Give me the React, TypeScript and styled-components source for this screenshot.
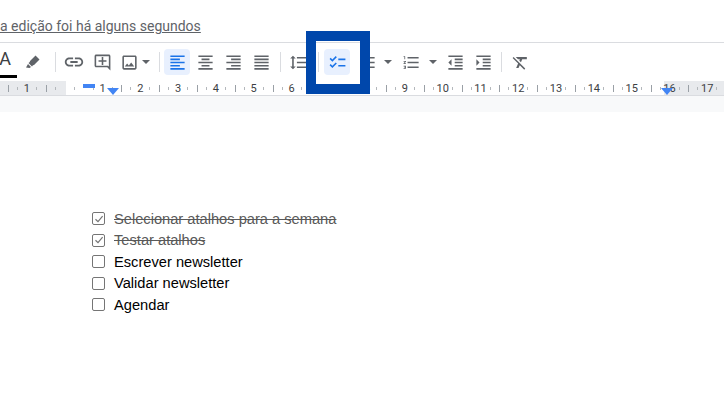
import styled, { createGlobalStyle } from "styled-components";
import { ReactNode } from "react";
import {
  MdChecklist,
  MdFormatAlignCenter,
  MdFormatAlignJustify,
  MdFormatAlignLeft,
  MdFormatAlignRight,
  MdFormatClear,
  MdFormatIndentDecrease,
  MdFormatIndentIncrease,
  MdFormatLineSpacing,
  MdFormatListBulleted,
  MdFormatListNumbered,
  MdLink,
  MdOutlineAddComment,
  MdOutlineImage,
} from "react-icons/md";

const CELL = 37.8;

const GlobalStyle = createGlobalStyle`
  html, body {
    margin: 0;
    background: #fff;
    overflow: hidden;
  }
`;

const Page = styled.div`
  position: relative;
  width: 724px;
  height: 408px;
  overflow: hidden;
  font-family: Roboto, "Liberation Sans", sans-serif;
`;

const StatusBar = styled.div`
  height: 42px;
  padding-top: 17px;
  box-sizing: border-box;
  font-size: 14px;
  line-height: 19px;
  color: #5f6368;
  text-decoration: underline;
  white-space: nowrap;
`;

const Toolbar = styled.div`
  display: flex;
  align-items: center;
  height: 39px;
  margin-left: -9px;
  border-top: 1px solid #dadce0;
  box-sizing: border-box;
  color: #5f6368;
`;

const ToolButton = styled.div<{ $w?: number; $ml?: number; $active?: boolean }>`
  display: flex;
  align-items: center;
  justify-content: center;
  flex: none;
  width: ${(p) => p.$w ?? 28}px;
  height: 26px;
  margin-left: ${(p) => p.$ml ?? 0}px;
  border-radius: 4px;
  background: ${(p) => (p.$active ? "#e8f0fe" : "transparent")};
  color: ${(p) => (p.$active ? "#1a73e8" : "#5f6368")};
`;

const Sep = styled.div<{ $l: number; $r: number }>`
  flex: none;
  width: 1px;
  height: 20px;
  margin: 0 ${(p) => p.$r}px 0 ${(p) => p.$l}px;
  background: #dadce0;
`;

const Caret = styled.div<{ $l?: number; $r?: number }>`
  flex: none;
  width: 0;
  height: 0;
  margin: 0 ${(p) => p.$r ?? 0}px 0 ${(p) => p.$l ?? 0}px;
  border-left: 4.5px solid transparent;
  border-right: 4.5px solid transparent;
  border-top: 4.5px solid #5f6368;
`;

const TextColorButton = styled.div`
  position: relative;
  flex: none;
  width: 28px;
  height: 32px;
  text-align: center;
  font-size: 18px;
  line-height: 26px;
  color: #3c4043;

  &::after {
    content: "";
    position: absolute;
    left: 9px;
    right: 2px;
    bottom: 0;
    height: 3px;
    background: #000;
  }
`;

const Ruler = styled.div`
  position: relative;
  display: flex;
  height: 15px;
  overflow: hidden;
  border-bottom: 1px solid #dadce0;
  box-sizing: border-box;
  background: linear-gradient(
    to right,
    #e8eaed 0,
    #e8eaed 66px,
    #fff 66px,
    #fff 664px,
    #e8eaed 664px
  );
`;

const RulerCell = styled.div<{ $hideEdge?: boolean }>`
  flex: none;
  width: ${CELL}px;
  height: 14px;
  box-sizing: border-box;
  padding-top: 1px;
  text-align: center;
  font-size: 11px;
  line-height: 14px;
  color: #3c4043;
  background-image: ${(p) => (p.$hideEdge ? "none" : "linear-gradient(#9aa0a6, #9aa0a6)")},
    linear-gradient(#b4b8bc, #b4b8bc), linear-gradient(#b4b8bc, #b4b8bc);
  background-size: 1px 7px, 1px 3px, 1px 3px;
  background-repeat: no-repeat;
  background-position: 0 4px, 9px 6px, 28px 6px;
`;

const RulerStart = styled.div`
  flex: none;
  width: 8px;
`;

const IndentBar = styled.div`
  position: absolute;
  left: 83px;
  top: 3px;
  width: 12px;
  height: 4px;
  background: #4285f4;
`;

const RulerArrow = styled.div<{ $x: number }>`
  position: absolute;
  left: ${(p) => p.$x}px;
  top: 7px;
  width: 0;
  height: 0;
  border-left: 6px solid transparent;
  border-right: 6px solid transparent;
  border-top: 7px solid #4285f4;
`;

const Band = styled.div`
  height: 16px;
  background: #f8f9fa;
`;

const Highlight = styled.div`
  position: absolute;
  left: 306px;
  top: 31px;
  width: 64px;
  height: 63px;
  box-sizing: border-box;
  border: 10px solid #0047ab;
`;

const CheckList = styled.ul`
  list-style: none;
  margin: 0;
  padding: 96px 0 0 92px;
  font-family: "Liberation Sans", Arial, sans-serif;
  font-size: 14.67px;
`;

const CheckRow = styled.li`
  display: flex;
  align-items: center;
  gap: 9px;
  height: 21.5px;
`;

const Box = styled.span`
  display: flex;
  align-items: center;
  justify-content: center;
  flex: none;
  width: 13px;
  height: 13px;
  box-sizing: border-box;
  border: 1.5px solid #757575;
  border-radius: 2px;
`;

const Label = styled.span<{ $done?: boolean }>`
  color: ${(p) => (p.$done ? "#595959" : "#000")};
  text-decoration: ${(p) => (p.$done ? "line-through" : "none")};
  white-space: nowrap;
`;

const tasks = [
  { label: "Selecionar atalhos para a semana", done: true },
  { label: "Testar atalhos", done: true },
  { label: "Escrever newsletter", done: false },
  { label: "Validar newsletter", done: false },
  { label: "Agendar", done: false },
];

const rulerLabels: (number | string)[] = [1, "", 1, 2, 3, 4, 5, 6, 7, 8, 9, 10, 11, 12, 13, 14, 15, 16, 17];

function Tool({ children, w, ml, active }: { children: ReactNode; w?: number; ml?: number; active?: boolean }) {
  return (
    <ToolButton $w={w} $ml={ml} $active={active}>
      {children}
    </ToolButton>
  );
}

function App() {
  return (
    <Page>
      <GlobalStyle />
      <StatusBar>a edição foi há alguns segundos</StatusBar>
      <Toolbar>
        <TextColorButton>A</TextColorButton>
        <Tool>
          <svg width="16" height="16" viewBox="0 0 16 16" fill="currentColor">
            <path d="M10.5 1.5 L14.5 5.5 L9 11 L8 11.2 L7 12.5 L3.5 9 L4.8 8 L5 7 Z" />
            <path d="M3 10 L6 13 L4.5 14 L1 13.5 Z" />
          </svg>
        </Tool>
        <Sep $l={8} $r={4} />
        <Tool>
          <MdLink size={22} />
        </Tool>
        <Tool>
          <MdOutlineAddComment size={19} />
        </Tool>
        <Tool w={26}>
          <MdOutlineImage size={19} />
        </Tool>
        <Caret $r={9} />
        <Sep $l={0} $r={4} />
        <Tool w={26} active>
          <MdFormatAlignLeft size={19} />
        </Tool>
        <Tool ml={1}>
          <MdFormatAlignCenter size={19} />
        </Tool>
        <Tool>
          <MdFormatAlignRight size={19} />
        </Tool>
        <Tool>
          <MdFormatAlignJustify size={19} />
        </Tool>
        <Sep $l={5} $r={3} />
        <Tool>
          <MdFormatLineSpacing size={19} />
        </Tool>
        <Sep $l={6} $r={5} />
        <Tool w={26} active>
          <MdChecklist size={19} />
        </Tool>
        <Tool ml={3}>
          <MdFormatListBulleted size={19} />
        </Tool>
        <Caret $l={3} $r={5} />
        <Tool>
          <MdFormatListNumbered size={19} />
        </Tool>
        <Caret $l={4} $r={4} />
        <Tool>
          <MdFormatIndentDecrease size={19} />
        </Tool>
        <Tool>
          <MdFormatIndentIncrease size={19} />
        </Tool>
        <Sep $l={4} $r={4} />
        <Tool>
          <MdFormatClear size={19} />
        </Tool>
      </Toolbar>
      <Ruler>
        <RulerStart />
        {rulerLabels.map((n, i) => (
          <RulerCell key={i} $hideEdge={i === 2}>
            {n}
          </RulerCell>
        ))}
        <IndentBar />
        <RulerArrow $x={107} />
        <RulerArrow $x={661} />
      </Ruler>
      <Band />
      <CheckList>
        {tasks.map((t) => (
          <CheckRow key={t.label}>
            <Box>
              {t.done && (
                <svg width="10" height="10" viewBox="0 0 10 10">
                  <path d="M1.5 5.2 L4 7.6 L8.6 2.2" fill="none" stroke="#757575" strokeWidth="1.2" />
                </svg>
              )}
            </Box>
            <Label $done={t.done}>{t.label}</Label>
          </CheckRow>
        ))}
      </CheckList>
      <Highlight />
    </Page>
  );
}

export default App;
